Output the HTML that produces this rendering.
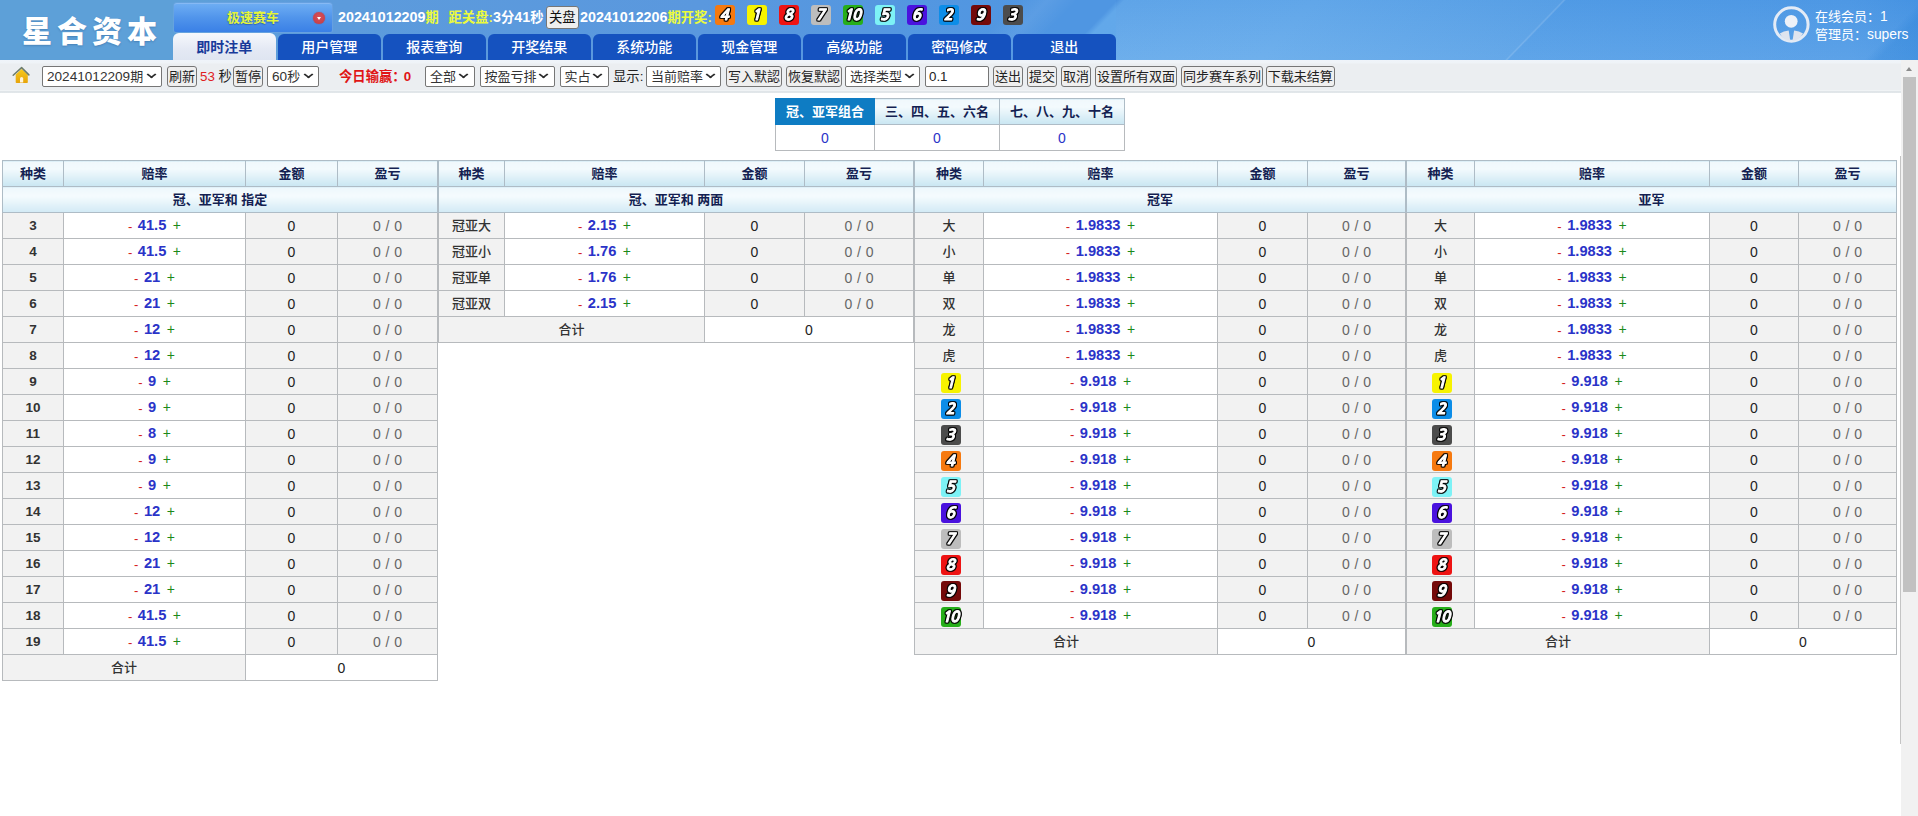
<!DOCTYPE html><html lang="zh-CN"><head><meta charset="utf-8"><title>星合资本</title><style>
*{box-sizing:border-box}
html,body{margin:0;padding:0}
body{width:1918px;height:816px;overflow:hidden;background:#fff;position:relative;font-family:"Liberation Sans","Noto Sans CJK SC",sans-serif;font-size:13px;color:#222}
#hd{position:absolute;left:0;top:0;width:1918px;height:60px;background:
 linear-gradient(90deg,#5da0d8 0,#5da0d8 173px,#5c9bdc 340px,#5a98de 700px,#4f96e2 1060px,#4f96e2 1500px,#539ee7 1505px,#509be6 1850px,#4896e4 1918px);overflow:hidden}
#hd .sk{position:absolute;top:0;height:60px;transform-origin:0 100%;transform:skewX(-44deg)}
.logo{position:absolute;left:22px;top:9.5px;width:150px;height:44px;line-height:44px;font-size:30px;font-weight:900;color:#fff;letter-spacing:5px;white-space:nowrap;text-shadow:0 1px 2px rgba(0,40,90,.25)}
.game{position:absolute;left:174px;top:3px;width:158px;height:29px;border-radius:3px 3px 2px 2px;border-top:1px solid #86b9f4;background:linear-gradient(#6dadf3 0,#5094eb 50%,#3a80e6 100%);color:#e4f53a;font-weight:bold;font-size:13px;line-height:28px;text-shadow:0 1px 1px rgba(20,50,120,.45);text-align:center;padding-right:0;box-shadow:0 0 0 1px rgba(120,170,235,.35)}
.game span{position:absolute;left:0;width:158px;text-align:center}
.dd{position:absolute;left:139px;top:7.500px;width:12px;height:12px;border-radius:50%;background:radial-gradient(circle at 50% 40%,#d8505a,#c03a44);box-shadow:0 0 1px #a33}
.dd:after{content:"";position:absolute;left:3.500px;top:5px;border:2.500px solid transparent;border-top:3.200px solid #fff;border-bottom:0}
.info{position:absolute;left:338px;top:0;height:35px;line-height:35px;white-space:nowrap;color:#fff;font-weight:bold;font-size:13.33px}
.info .y{color:#ecfb3c}
.info .d{font-size:14.3px}
.info>span{position:absolute;top:0;white-space:nowrap}
.btn{display:inline-block;border:1px solid #767676;border-radius:3px;background:#efefef;color:#111;font-weight:normal;font-size:13.33px;text-align:center;white-space:nowrap}
.nav{position:absolute;left:173px;top:33px;height:27px}
.nav a{position:absolute;top:1px;width:102.600px;height:26px;line-height:26px;text-align:center;color:#fff;background:#1552bf;border-radius:6px 6px 0 0;font-size:14px;font-weight:500}
.nav a.on{font-weight:700;top:0;height:27px;line-height:28px;background:linear-gradient(#f6f8fc,#e4e9f4 60%,#dfe5f1);color:#183a9a}
.user{position:absolute;left:1815px;top:8px;color:#fff;font-size:13px;line-height:17.5px;white-space:nowrap}
.user span{font-size:13.8px}
#hd .vg{position:absolute;left:1116px;top:0;width:802px;height:60px;background:linear-gradient(rgba(30,90,190,.05),rgba(255,255,255,.07))}
.avatar{position:absolute;left:1773px;top:6px;width:37px;height:37px}
#tb{position:absolute;left:0;top:60px;width:1901px;height:33px;background:linear-gradient(#eff4fa 0,#eff3f7 3px,#ebeef1 4px,#ebeef1 30px,#f0f3f5 30px,#f0f3f5 31px,#dfe4e8 31px,#e2e7ea 33px)}
#tb .i{position:absolute;top:6px;height:21px;line-height:19px;font-size:13.33px;white-space:nowrap}
#tb .sel{font-size:13px;border:1px solid #767676;border-radius:2px;background:#fff;color:#333;padding-left:4px;text-align:left}
#tb .sel:after{content:"";position:absolute;right:6.500px;top:3.500px;width:5px;height:5px;border-right:2px solid #2a2a2a;border-bottom:2px solid #2a2a2a;transform:scaleY(.78) rotate(45deg)}
#tb .bt{border:1px solid #767676;border-radius:3px;background:#efefef;color:#222;text-align:center;font-size:13px}
#tb .inp{border:1px solid #767676;border-radius:2px;background:#fff;padding-left:3px}
#tb .t{height:21px;line-height:21px}
#sb{position:absolute;left:1901px;top:60px;width:17px;height:756px;background:#f1f1f1}
#sb .th{position:absolute;left:2px;top:17px;width:13px;height:515px;background:#c1c1c1}
#sb .up{position:absolute;left:5px;top:7px;border:3.500px solid transparent;border-bottom:4px solid #8b8b8b;border-top:0}
#vl{position:absolute;left:1900px;top:156px;width:1px;height:588px;background:#c4c4c4}
table{border-collapse:collapse;table-layout:fixed;position:absolute}
td,th{border:1px solid #b7babd;height:26px;padding:0;text-align:center;font-size:13px;overflow:hidden;white-space:nowrap}
th{background:linear-gradient(#f0f8fc 0,#f3fafd 30%,#c9e6f2 100%);border-color:#aebcc6;color:#141f52;font-weight:bold;padding-bottom:1.500px}
tr.tt th{background:linear-gradient(#edf7fc 0,#f5fbfe 35%,#d2eaf5 100%)}
td{background:#f2f2f2;color:#222;font-size:14px;padding-top:1px}
td.o{background:#fff;color:#2a33c8;font-weight:bold;font-size:14.67px;padding-top:0;padding-bottom:1px}
td.o i{font-style:normal;font-weight:normal;color:#d42020;font-size:13px;margin-right:5.500px;position:relative;top:1px}
td.o b{font-weight:normal;color:#1a8a1a;font-size:14px;margin-left:6.500px}
td.k{font-weight:bold;color:#333;font-size:13.5px;padding-top:0}
td.c{color:#333;font-size:13px;font-weight:500;padding-top:0;padding-bottom:2.500px}
td.g{color:#666;word-spacing:.8px}
td.w{background:#fff}
td.bc{padding:0;line-height:0;font-size:0;vertical-align:top}
td.bc .b{margin:4px 0 0 4px}
#t4 td.bc .b{margin-left:3px}
.b{display:inline-block;width:20px;height:20px;border-radius:3px;line-height:20px;text-align:center;font-style:italic;font-weight:bold;font-size:15px;color:#fff;vertical-align:top;font-family:"NanumGothic","Liberation Sans",sans-serif}
.b i{display:inline-block;font-style:italic;margin-left:-1.500px;-webkit-text-stroke:1px #fff;filter:drop-shadow(1px 0 0 rgba(0,0,0,.85)) drop-shadow(-1px 0 0 rgba(0,0,0,.85)) drop-shadow(0 1px 0 rgba(0,0,0,.85)) drop-shadow(0 -1px 0 rgba(0,0,0,.85))}
.b10 i{letter-spacing:-1px;margin-left:-2px}
.b1{background:#f7f300}.b2{background:#0c8de8}.b3{background:#4c4c4c}.b4{background:#f6790f}.b5{background:#7df2f6}
.b6{background:#4a12de}.b7{background:#bdbdbd}.b8{background:#ee1313}.b9{background:#740909}.b10{background:#27ae1a}
.hb{position:absolute;top:5px}
#top th{height:26px}
#top th.on{background:#0e7cc3;color:#fff;border-color:#0e7cc3}
#top td{background:#fff;color:#2a33c8}
</style></head><body>
<div id="hd">
<div class="sk" style="left:1059px;width:447px;background:linear-gradient(90deg,rgba(100,170,236,.0),#62a8ea 8px,#64aaeb 200px,#5aa2e7 447px)"></div>
<div class="sk" style="left:1505px;width:3px;background:linear-gradient(90deg,rgba(255,255,255,.06),rgba(255,255,255,.17),rgba(255,255,255,.06))"></div>
<div class="sk" style="left:960px;width:60px;background:linear-gradient(90deg,rgba(255,255,255,0),rgba(255,255,255,.07),rgba(255,255,255,0))"></div>
<div class="sk" style="left:1864px;width:140px;background:linear-gradient(90deg,rgba(40,128,215,.0),rgba(45,132,218,.45) 14px,rgba(45,132,218,.6) 60px)"></div>
<div class="vg"></div>
<div class="logo">星合资本</div>
<div class="game"><span>极速赛车</span><i class="dd"></i></div>
<div class="info"><span style="left:0"><b class="d">20241012209</b><span class="y">期</span></span><span style="left:110.5px"><span class="y">距关盘:</span><b class="d">3</b>分<b class="d">41</b>秒</span><span class="btn" style="left:208px;top:6px;width:32.5px;height:23px;line-height:21px">关盘</span><span style="left:242px"><b class="d">20241012206</b><span class="y">期开奖:</span></span></div>
<span class="b b4 hb" style="left:715px"><i>4</i></span>
<span class="b b1 hb" style="left:747px"><i>1</i></span>
<span class="b b8 hb" style="left:779px"><i>8</i></span>
<span class="b b7 hb" style="left:811px"><i>7</i></span>
<span class="b b10 hb" style="left:843px"><i>10</i></span>
<span class="b b5 hb" style="left:875px"><i>5</i></span>
<span class="b b6 hb" style="left:907px"><i>6</i></span>
<span class="b b2 hb" style="left:939px"><i>2</i></span>
<span class="b b9 hb" style="left:971px"><i>9</i></span>
<span class="b b3 hb" style="left:1003px"><i>3</i></span>
<div class="nav">
<a class="on" style="left:0px">即时注单</a>
<a class="" style="left:105px">用户管理</a>
<a class="" style="left:210px">报表查询</a>
<a class="" style="left:315px">开奖结果</a>
<a class="" style="left:420px">系统功能</a>
<a class="" style="left:525px">现金管理</a>
<a class="" style="left:630px">高级功能</a>
<a class="" style="left:735px">密码修改</a>
<a class="" style="left:840px">退出</a>
</div>
<svg class="avatar" viewBox="0 0 37 37"><circle cx="18.400" cy="18.500" r="16.700" fill="none" stroke="#e3ebf6" stroke-width="3"/><circle cx="18.200" cy="15.300" r="6.400" fill="#edf1f8"/><path d="M6.800 27.500Q10.500 24.600 15.700 24.400L17.300 35Q10.500 34.500 6.800 27.500z" fill="#dfe4ee"/><path d="M30 27.500Q26.300 24.600 21.100 24.400L19.500 35Q26.300 34.500 30 27.500z" fill="#dfe4ee"/></svg>
<div class="user">在线会员：<span>1</span><br>管理员：<span>supers</span></div>
</div>
<div id="tb">
<svg class="i" style="left:12px;top:6px;width:18px;height:18px" viewBox="0 0 18 18"><defs><linearGradient id="hg" x1="0" y1="0" x2="0" y2="1"><stop offset="0" stop-color="#f7cb1c"/><stop offset="1" stop-color="#e6a30b"/></linearGradient></defs><path d="M3.700 8.600L9.600 3 15.800 8.600V16.300Q15.800 17.100 15 17.100H4.500Q3.700 17.100 3.700 16.300z" fill="url(#hg)"/><path d="M1.200 9.300L9.600 1.600 16.900 8.900" stroke="#6d7c6b" stroke-width="1.500" fill="none" stroke-linecap="round" stroke-linejoin="round"/><path d="M8 16.600V12.400Q8 10.900 9.600 10.900Q11.200 10.900 11.200 12.400V16.600z" fill="#fff4dc"/></svg>
<div class="i sel" style="left:42px;width:120px"><span style="font-size:13.6px">20241012209</span>期</div>
<div class="i bt" style="left:167px;width:30px">刷新</div>
<div class="i t" style="left:200px;"><span style="color:#e02020">53</span> 秒</div>
<div class="i bt" style="left:233px;width:30px">暂停</div>
<div class="i sel" style="left:267px;width:52px"><span style="font-size:13.6px">60</span>秒</div>
<div class="i t" style="left:339px;"><b style="color:#e01515">今日输赢<span style="letter-spacing:-2px">：</span>0</b></div>
<div class="i sel" style="left:425px;width:49.5px">全部</div>
<div class="i sel" style="left:479.5px;width:75px">按盈亏排</div>
<div class="i sel" style="left:559.5px;width:49px">实占</div>
<div class="i t" style="left:613px;">显示:</div>
<div class="i sel" style="left:646px;width:75px">当前赔率</div>
<div class="i bt" style="left:726px;width:56px">写入默認</div>
<div class="i bt" style="left:786px;width:56px">恢复默認</div>
<div class="i sel" style="left:845px;width:75px">选择类型</div>
<div class="i inp" style="left:925px;width:64px">0.1</div>
<div class="i bt" style="left:993px;width:30px">送出</div>
<div class="i bt" style="left:1027px;width:30px">提交</div>
<div class="i bt" style="left:1061px;width:30px">取消</div>
<div class="i bt" style="left:1095px;width:82px">设置所有双面</div>
<div class="i bt" style="left:1181px;width:82px">同步赛车系列</div>
<div class="i bt" style="left:1266px;width:68.5px">下载未结算</div>
</div>
<div id="vl"></div>
<div id="sb"><i class="up"></i><div class="th"></div></div>
<table id="top" style="left:775px;top:98px;width:349px"><colgroup><col style="width:99px"><col style="width:125px"><col style="width:125px"></colgroup><tr><th class="on">冠、亚军组合</th><th>三、四、五、六名</th><th>七、八、九、十名</th></tr><tr><td>0</td><td>0</td><td>0</td></tr></table>
<table id="t1" style="left:2px;top:160px;width:436px"><colgroup><col style="width:61px"><col style="width:182px"><col style="width:92px"><col style="width:100px"></colgroup><tr><th>种类</th><th>赔率</th><th>金额</th><th>盈亏</th></tr><tr class="tt"><th colspan="4">冠、亚军和 指定</th></tr><tr><td class="k">3</td><td class="o"><i>-</i>41.5<b>+</b></td><td>0</td><td class="g">0 / 0</td></tr><tr><td class="k">4</td><td class="o"><i>-</i>41.5<b>+</b></td><td>0</td><td class="g">0 / 0</td></tr><tr><td class="k">5</td><td class="o"><i>-</i>21<b>+</b></td><td>0</td><td class="g">0 / 0</td></tr><tr><td class="k">6</td><td class="o"><i>-</i>21<b>+</b></td><td>0</td><td class="g">0 / 0</td></tr><tr><td class="k">7</td><td class="o"><i>-</i>12<b>+</b></td><td>0</td><td class="g">0 / 0</td></tr><tr><td class="k">8</td><td class="o"><i>-</i>12<b>+</b></td><td>0</td><td class="g">0 / 0</td></tr><tr><td class="k">9</td><td class="o"><i>-</i>9<b>+</b></td><td>0</td><td class="g">0 / 0</td></tr><tr><td class="k">10</td><td class="o"><i>-</i>9<b>+</b></td><td>0</td><td class="g">0 / 0</td></tr><tr><td class="k">11</td><td class="o"><i>-</i>8<b>+</b></td><td>0</td><td class="g">0 / 0</td></tr><tr><td class="k">12</td><td class="o"><i>-</i>9<b>+</b></td><td>0</td><td class="g">0 / 0</td></tr><tr><td class="k">13</td><td class="o"><i>-</i>9<b>+</b></td><td>0</td><td class="g">0 / 0</td></tr><tr><td class="k">14</td><td class="o"><i>-</i>12<b>+</b></td><td>0</td><td class="g">0 / 0</td></tr><tr><td class="k">15</td><td class="o"><i>-</i>12<b>+</b></td><td>0</td><td class="g">0 / 0</td></tr><tr><td class="k">16</td><td class="o"><i>-</i>21<b>+</b></td><td>0</td><td class="g">0 / 0</td></tr><tr><td class="k">17</td><td class="o"><i>-</i>21<b>+</b></td><td>0</td><td class="g">0 / 0</td></tr><tr><td class="k">18</td><td class="o"><i>-</i>41.5<b>+</b></td><td>0</td><td class="g">0 / 0</td></tr><tr><td class="k">19</td><td class="o"><i>-</i>41.5<b>+</b></td><td>0</td><td class="g">0 / 0</td></tr><tr><td colspan="2" class="c">合计</td><td colspan="2" class="w">0</td></tr></table>
<table id="t2" style="left:438px;top:160px;width:476px"><colgroup><col style="width:66px"><col style="width:200px"><col style="width:100px"><col style="width:109px"></colgroup><tr><th>种类</th><th>赔率</th><th>金额</th><th>盈亏</th></tr><tr class="tt"><th colspan="4">冠、亚军和 两面</th></tr><tr><td class="c">冠亚大</td><td class="o"><i>-</i>2.15<b>+</b></td><td>0</td><td class="g">0 / 0</td></tr><tr><td class="c">冠亚小</td><td class="o"><i>-</i>1.76<b>+</b></td><td>0</td><td class="g">0 / 0</td></tr><tr><td class="c">冠亚单</td><td class="o"><i>-</i>1.76<b>+</b></td><td>0</td><td class="g">0 / 0</td></tr><tr><td class="c">冠亚双</td><td class="o"><i>-</i>2.15<b>+</b></td><td>0</td><td class="g">0 / 0</td></tr><tr><td colspan="2" class="c">合计</td><td colspan="2" class="w">0</td></tr></table>
<table id="t3" style="left:914px;top:160px;width:492px"><colgroup><col style="width:69px"><col style="width:234px"><col style="width:90px"><col style="width:98px"></colgroup><tr><th>种类</th><th>赔率</th><th>金额</th><th>盈亏</th></tr><tr class="tt"><th colspan="4">冠军</th></tr><tr><td class="c">大</td><td class="o"><i>-</i>1.9833<b>+</b></td><td>0</td><td class="g">0 / 0</td></tr><tr><td class="c">小</td><td class="o"><i>-</i>1.9833<b>+</b></td><td>0</td><td class="g">0 / 0</td></tr><tr><td class="c">单</td><td class="o"><i>-</i>1.9833<b>+</b></td><td>0</td><td class="g">0 / 0</td></tr><tr><td class="c">双</td><td class="o"><i>-</i>1.9833<b>+</b></td><td>0</td><td class="g">0 / 0</td></tr><tr><td class="c">龙</td><td class="o"><i>-</i>1.9833<b>+</b></td><td>0</td><td class="g">0 / 0</td></tr><tr><td class="c">虎</td><td class="o"><i>-</i>1.9833<b>+</b></td><td>0</td><td class="g">0 / 0</td></tr><tr><td class="bc"><span class="b b1 "><i>1</i></span></td><td class="o"><i>-</i>9.918<b>+</b></td><td>0</td><td class="g">0 / 0</td></tr><tr><td class="bc"><span class="b b2 "><i>2</i></span></td><td class="o"><i>-</i>9.918<b>+</b></td><td>0</td><td class="g">0 / 0</td></tr><tr><td class="bc"><span class="b b3 "><i>3</i></span></td><td class="o"><i>-</i>9.918<b>+</b></td><td>0</td><td class="g">0 / 0</td></tr><tr><td class="bc"><span class="b b4 "><i>4</i></span></td><td class="o"><i>-</i>9.918<b>+</b></td><td>0</td><td class="g">0 / 0</td></tr><tr><td class="bc"><span class="b b5 "><i>5</i></span></td><td class="o"><i>-</i>9.918<b>+</b></td><td>0</td><td class="g">0 / 0</td></tr><tr><td class="bc"><span class="b b6 "><i>6</i></span></td><td class="o"><i>-</i>9.918<b>+</b></td><td>0</td><td class="g">0 / 0</td></tr><tr><td class="bc"><span class="b b7 "><i>7</i></span></td><td class="o"><i>-</i>9.918<b>+</b></td><td>0</td><td class="g">0 / 0</td></tr><tr><td class="bc"><span class="b b8 "><i>8</i></span></td><td class="o"><i>-</i>9.918<b>+</b></td><td>0</td><td class="g">0 / 0</td></tr><tr><td class="bc"><span class="b b9 "><i>9</i></span></td><td class="o"><i>-</i>9.918<b>+</b></td><td>0</td><td class="g">0 / 0</td></tr><tr><td class="bc"><span class="b b10 "><i>10</i></span></td><td class="o"><i>-</i>9.918<b>+</b></td><td>0</td><td class="g">0 / 0</td></tr><tr><td colspan="2" class="c">合计</td><td colspan="2" class="w">0</td></tr></table>
<table id="t4" style="left:1406px;top:160px;width:491px"><colgroup><col style="width:68px"><col style="width:235px"><col style="width:89px"><col style="width:98px"></colgroup><tr><th>种类</th><th>赔率</th><th>金额</th><th>盈亏</th></tr><tr class="tt"><th colspan="4">亚军</th></tr><tr><td class="c">大</td><td class="o"><i>-</i>1.9833<b>+</b></td><td>0</td><td class="g">0 / 0</td></tr><tr><td class="c">小</td><td class="o"><i>-</i>1.9833<b>+</b></td><td>0</td><td class="g">0 / 0</td></tr><tr><td class="c">单</td><td class="o"><i>-</i>1.9833<b>+</b></td><td>0</td><td class="g">0 / 0</td></tr><tr><td class="c">双</td><td class="o"><i>-</i>1.9833<b>+</b></td><td>0</td><td class="g">0 / 0</td></tr><tr><td class="c">龙</td><td class="o"><i>-</i>1.9833<b>+</b></td><td>0</td><td class="g">0 / 0</td></tr><tr><td class="c">虎</td><td class="o"><i>-</i>1.9833<b>+</b></td><td>0</td><td class="g">0 / 0</td></tr><tr><td class="bc"><span class="b b1 "><i>1</i></span></td><td class="o"><i>-</i>9.918<b>+</b></td><td>0</td><td class="g">0 / 0</td></tr><tr><td class="bc"><span class="b b2 "><i>2</i></span></td><td class="o"><i>-</i>9.918<b>+</b></td><td>0</td><td class="g">0 / 0</td></tr><tr><td class="bc"><span class="b b3 "><i>3</i></span></td><td class="o"><i>-</i>9.918<b>+</b></td><td>0</td><td class="g">0 / 0</td></tr><tr><td class="bc"><span class="b b4 "><i>4</i></span></td><td class="o"><i>-</i>9.918<b>+</b></td><td>0</td><td class="g">0 / 0</td></tr><tr><td class="bc"><span class="b b5 "><i>5</i></span></td><td class="o"><i>-</i>9.918<b>+</b></td><td>0</td><td class="g">0 / 0</td></tr><tr><td class="bc"><span class="b b6 "><i>6</i></span></td><td class="o"><i>-</i>9.918<b>+</b></td><td>0</td><td class="g">0 / 0</td></tr><tr><td class="bc"><span class="b b7 "><i>7</i></span></td><td class="o"><i>-</i>9.918<b>+</b></td><td>0</td><td class="g">0 / 0</td></tr><tr><td class="bc"><span class="b b8 "><i>8</i></span></td><td class="o"><i>-</i>9.918<b>+</b></td><td>0</td><td class="g">0 / 0</td></tr><tr><td class="bc"><span class="b b9 "><i>9</i></span></td><td class="o"><i>-</i>9.918<b>+</b></td><td>0</td><td class="g">0 / 0</td></tr><tr><td class="bc"><span class="b b10 "><i>10</i></span></td><td class="o"><i>-</i>9.918<b>+</b></td><td>0</td><td class="g">0 / 0</td></tr><tr><td colspan="2" class="c">合计</td><td colspan="2" class="w">0</td></tr></table>
</body></html>
